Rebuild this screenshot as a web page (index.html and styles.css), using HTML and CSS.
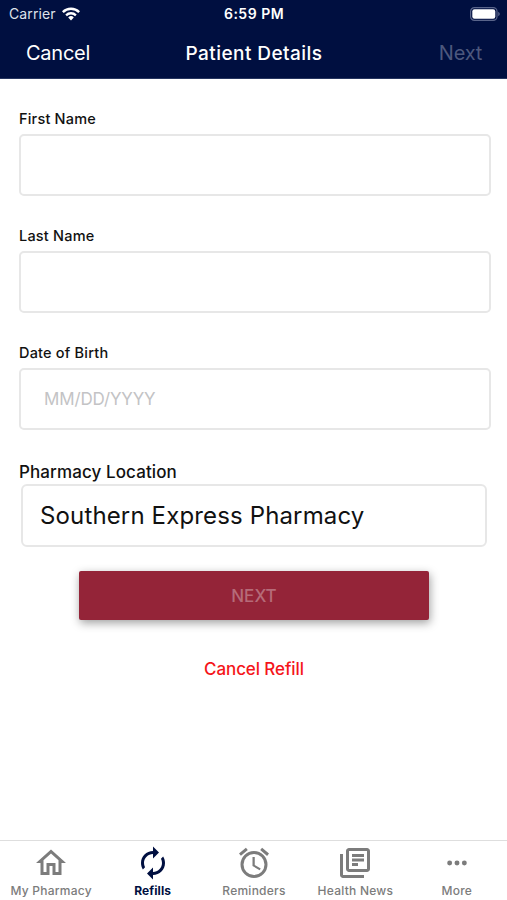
FILE: index.html
```html
<!DOCTYPE html>
<html lang="en">
<head>
<meta charset="utf-8">
<title>Patient Details</title>
<link rel="stylesheet" href="styles.css">
</head>
<body>
<div class="screen">
  <header class="header">
    <div class="status">
      <div class="carrier"><span>Carrier</span>
        <svg class="wifi" viewBox="0 0 18 14"><path d="M9 13.4 6.2 10.4a4 4 0 0 1 5.6 0zM3.3 7.5a8 8 0 0 1 11.4 0l-1.6 1.7a5.8 5.8 0 0 0-8.2 0zM0 4.3a12.7 12.7 0 0 1 18 0l-1.7 1.8a10.3 10.3 0 0 0-14.6 0z" fill="#fff"/></svg>
      </div>
      <div class="time">6:59 PM</div>
      <svg class="battery" viewBox="0 0 30 14"><rect x=".6" y=".6" width="26.4" height="12.8" rx="3.8" fill="none" stroke="#59648a" stroke-width="1.2"/><rect x="2.3" y="2.3" width="23" height="9.4" rx="2.2" fill="#fff"/><path d="M28.2 4.7q1.6.7 1.6 2.3t-1.6 2.3z" fill="#59648a"/></svg>
    </div>
    <nav class="navbar">
      <span class="nav-cancel">Cancel</span>
      <span class="nav-title">Patient Details</span>
      <span class="nav-next">Next</span>
    </nav>
  </header>
  <main class="form">
    <div class="field"><label for="first">First Name</label><input id="first" type="text"></div>
    <div class="field"><label for="last">Last Name</label><input id="last" type="text"></div>
    <div class="field"><label for="dob">Date of Birth</label><input id="dob" type="text" placeholder="MM/DD/YYYY"></div>
    <div class="location-label">Pharmacy Location</div>
    <div class="location"><span>Southern Express Pharmacy</span></div>
    <button class="submit" type="button"><span>NEXT</span></button>
    <div class="cancel-refill"><span>Cancel Refill</span></div>
  </main>
  <footer class="tabs">
    <div class="tab t-home"><svg viewBox="0 0 24 24"><path d="M12 5.69l5 4.5V18h-2v-6H9v6H7v-7.81l5-4.5M12 3L2 12h3v8h6v-6h2v6h6v-8h3L12 3z"/></svg><span>My Pharmacy</span></div>
    <div class="tab t-refills active"><svg viewBox="0 0 24 24"><path d="M12 6v3l4-4-4-4v3c-4.42 0-8 3.58-8 8 0 1.57.46 3.03 1.24 4.26L6.7 14.8A5.87 5.87 0 0 1 6 12c0-3.31 2.69-6 6-6zm6.76 1.74L17.3 9.2c.44.84.7 1.79.7 2.8 0 3.31-2.69 6-6 6v-3l-4 4 4 4v-3c4.42 0 8-3.58 8-8 0-1.57-.46-3.03-1.24-4.26z"/></svg><span>Refills</span></div>
    <div class="tab t-reminders"><svg viewBox="0 0 24 24"><path d="M22 5.72l-4.6-3.86-1.29 1.53 4.6 3.86L22 5.72zM7.88 3.39L6.6 1.86 2 5.71l1.29 1.53 4.59-3.85zM12.5 8H11v6l4.75 2.85.75-1.23-4-2.37V8zM12 4a9 9 0 1 0 0 18 9 9 0 0 0 0-18zm0 16a7 7 0 1 1 0-14 7 7 0 0 1 0 14z"/></svg><span>Reminders</span></div>
    <div class="tab t-news"><svg viewBox="0 0 24 24"><path d="M4 6H2v14c0 1.1.9 2 2 2h14v-2H4V6zm16-4H8c-1.1 0-2 .9-2 2v12c0 1.1.9 2 2 2h12c1.1 0 2-.9 2-2V4c0-1.1-.9-2-2-2zm0 14H8V4h12v12zM10 9h8v2h-8zm0 3h4v2h-4zm0-6h8v2h-8z"/></svg><span>Health News</span></div>
    <div class="tab t-more"><svg viewBox="0 0 24 24"><circle cx="7.1" cy="12" r="1.65"/><circle cx="12" cy="12" r="1.65"/><circle cx="16.9" cy="12" r="1.65"/></svg><span>More</span></div>
  </footer>
</div>
</body>
</html>
```
FILE: styles.css
```css
* { box-sizing: border-box; }
body { margin: 0; background: #fff; font-family: Inter, "Liberation Sans", sans-serif; color: #111; }
.screen { width: 507px; height: 900px; display: flex; flex-direction: column; overflow: hidden; }
.header { height: 79px; flex: none; background: #000f40; color: #fff; border-bottom: 1px solid #26355f; }
.status { height: 27px; display: grid; grid-template-columns: 1fr auto 1fr; align-items: center; padding: 0 7px 0 9px; font-size: 14px; line-height: 27px; }
.carrier { display: flex; align-items: center; gap: 6px; color: #dfe2ea; }
.carrier span { letter-spacing: .1px; }
.wifi { width: 18px; height: 14px; }
.time { font-weight: 600; letter-spacing: .5px; margin-right: 1px; }
.battery { width: 30px; height: 14px; justify-self: end; }
.navbar { height: 51px; display: grid; grid-template-columns: 1fr auto 1fr; align-items: center; padding: 1px 25px 0; font-size: 20px; line-height: 50px; }
.nav-cancel { letter-spacing: -.25px; padding: 0 0 1px 1px; }
.nav-title { font-size: 19px; font-weight: 500; letter-spacing: .45px; padding: 1px 0 0 1px; }
.nav-next { justify-self: end; color: #4d587d; letter-spacing: -.25px; padding-bottom: 1px; }
.form { flex: 1; padding: 29px 16px 0 19px; display: flex; flex-direction: column; }
.field { height: 117px; flex: none; display: flex; flex-direction: column; }
.field label { height: 26px; line-height: 22px; font-size: 14.5px; font-weight: 500; letter-spacing: .2px; }
.field input { width: 472px; height: 62px; padding: 0 23px; border: 2px solid #e7e7e7; border-radius: 5px; background: #fff; font: 17px Inter, sans-serif; letter-spacing: -.15px; outline: none; }
.field input::placeholder { color: #c3c3c5; opacity: 1; }
.location-label { height: 25px; line-height: 26px; font-size: 17px; font-weight: 500; letter-spacing: .1px; }
.location { width: 466px; height: 63px; margin-left: 2px; padding-left: 17px; border: 2px solid #e7e7e7; border-radius: 6px; font-size: 24px; letter-spacing: .14px; line-height: 59px; white-space: nowrap; }
.submit { width: 350px; height: 49px; margin: 24px 0 0 60px; padding: 0; border: 0; border-radius: 2px; background: #942438; color: #b66b79; font: 500 17px Inter, sans-serif; box-shadow: 1px 3px 10px rgba(0,0,0,.38); }
.cancel-refill { margin: 35px 2px 0 0; text-align: center; color: #f5151a; font-size: 17px; font-weight: 500; letter-spacing: -.1px; line-height: 28px; }
.tabs { height: 60px; flex: none; border-top: 1px solid #dedede; display: grid; grid-template-columns: repeat(5, 1fr); }
.tab { display: flex; flex-direction: column; align-items: center; padding: 4px 0 0 1px; color: #7c7c7c; font-size: 12px; font-weight: 500; letter-spacing: .25px; line-height: 20px; white-space: nowrap; }
.tab svg { width: 36px; height: 36px; fill: currentColor; }
.tab.active { color: #000f40; font-weight: 700; letter-spacing: .1px; }
```
